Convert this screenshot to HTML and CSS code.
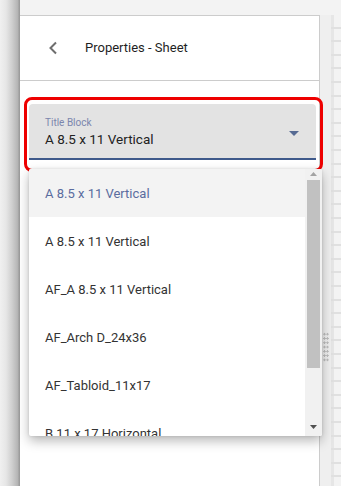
FILE: index.html
```html
<!DOCTYPE html>
<html>
<head>
<meta charset="utf-8">
<link rel="stylesheet" href="styles.css">
</head>
<body>
<div class="app">
  <div class="left-strip"></div>
  <div class="main">
    <div class="topbar"></div>
    <div class="row">
      <div class="panel">
        <div class="header">
          <svg class="back" width="10" height="14" viewBox="0 0 10 14"><path d="M8 1.5 L2.5 7 L8 12.5" fill="none" stroke="#6e6e6e" stroke-width="2"/></svg>
          <span class="title">Properties - Sheet</span>
        </div>
        <div class="body">
          <div class="highlight">
            <div class="select">
              <div class="select-text">
                <div class="label">Title Block</div>
                <div class="value">A 8.5 x 11 Vertical</div>
              </div>
              <svg class="caret" width="10" height="5" viewBox="0 0 10 5"><path d="M0 0 H10 L5 5 Z" fill="#566a93"/></svg>
            </div>
          </div>
        </div>
        <div class="dropdown">
          <div class="list">
            <div class="item selected">A 8.5 x 11 Vertical</div>
            <div class="item">A 8.5 x 11 Vertical</div>
            <div class="item">AF_A 8.5 x 11 Vertical</div>
            <div class="item">AF_Arch D_24x36</div>
            <div class="item">AF_Tabloid_11x17</div>
            <div class="item">B 11 x 17 Horizontal</div>
          </div>
          <div class="scrollbar">
            <svg class="arrow" width="7" height="4" viewBox="0 0 7 4"><path d="M0 4 H7 L3.5 0 Z" fill="#a3a3a3"/></svg>
            <div class="thumb"></div>
            <div class="spacer"></div>
            <svg class="arrow" width="7" height="4" viewBox="0 0 7 4"><path d="M0 0 H7 L3.5 4 Z" fill="#505050"/></svg>
          </div>
        </div>
      </div>
      <div class="side">
        <div class="grip"></div>
        <div class="ruler"></div>
      </div>
    </div>
  </div>
</div>
</body>
</html>
```
FILE: styles.css
```css
html, body {
  margin: 0;
  padding: 0;
  width: 341px;
  height: 486px;
  overflow: hidden;
  font-family: Roboto, "Liberation Sans", sans-serif;
}

.app {
  display: flex;
  width: 341px;
  height: 486px;
}

.left-strip {
  width: 20px;
  flex: none;
  background: linear-gradient(to right, #f0f0f0 0px, #e6e6e6 6px, #cfcfcf 12px, #b3b3b3 18px, #9c9c9c 19px, #9c9c9c 20px);
}

.main {
  flex: 1;
  display: flex;
  flex-direction: column;
  min-width: 0;
}

.topbar {
  height: 15px;
  flex: none;
  background: #f3f3f3;
}

.row {
  flex: 1;
  display: flex;
  min-height: 0;
}

.panel {
  position: relative;
  width: 299px;
  flex: none;
  background: #fff;
  border-top: 1px solid #cccccc;
  border-right: 1px solid #cccccc;
}

.header {
  height: 64px;
  border-bottom: 1px solid #cccccc;
  display: flex;
  align-items: center;
  padding-left: 28px;
  gap: 27px;
}

.back {
  display: block;
  flex: none;
}

.title {
  font-size: 13px;
  color: #1f1f1f;
  position: relative;
  top: -1px;
}

.body {
  padding: 16px 0 0 4px;
}

.highlight {
  width: 287px;
  height: 65px;
  border: 3.5px solid #ee0000;
  border-radius: 8px;
  padding: 4px 4px 0 2px;
  box-sizing: content-box;
}

.select {
  height: 54px;
  background: #e3e3e3;
  border-radius: 4px 4px 0 0;
  border-bottom: 2px solid #3f5a8b;
  display: flex;
  align-items: center;
  padding: 0 17px 0 16px;
}

.select-text {
  flex: 1;
  padding-top: 4px;
}

.label {
  font-size: 10px;
  line-height: 13px;
  color: #7b86ad;
}

.value {
  font-size: 13.5px;
  line-height: 21px;
  color: #222222;
}

.caret {
  display: block;
  margin-top: 4px;
}

.dropdown {
  position: absolute;
  left: 9px;
  top: 153px;
  width: 293px;
  height: 267px;
  display: flex;
  background: #fff;
  border-radius: 2px;
  box-shadow: 0 5px 12px rgba(0, 0, 0, 0.28), 0 0 3px rgba(0, 0, 0, 0.12);
  overflow: hidden;
}

.list {
  flex: 1;
  overflow: hidden;
}

.item {
  height: 48px;
  display: flex;
  align-items: center;
  padding-left: 16px;
  font-size: 13px;
  color: #333333;
}

.item.selected {
  background: #f3f3f3;
  color: #5a6c9f;
}

.scrollbar {
  width: 17px;
  flex: none;
  background: #f1f1f1;
  display: flex;
  flex-direction: column;
  align-items: center;
  padding: 3px 0 7px;
  box-sizing: border-box;
}

.arrow {
  display: block;
  flex: none;
}

.thumb {
  width: 13px;
  height: 188px;
  margin-top: 4px;
  background: #c1c1c1;
}

.spacer {
  flex: 1;
}

.side {
  flex: 1;
  display: flex;
  background: #efefef;
}

.grip {
  width: 6px;
  height: 30px;
  margin: 317px 0 0 3px;
  background-image: radial-gradient(circle, #bdbdbd 1px, transparent 1.1px);
  background-size: 3px 4.3px;
}

.ruler {
  width: 10px;
  margin-left: auto;
  background:
    repeating-linear-gradient(to bottom, transparent 0 11.6px, #e0e0e0 11.6px 13.6px),
    linear-gradient(to right, #e6e6e6 0 3px, #f3f3f3 3px);
}
```
